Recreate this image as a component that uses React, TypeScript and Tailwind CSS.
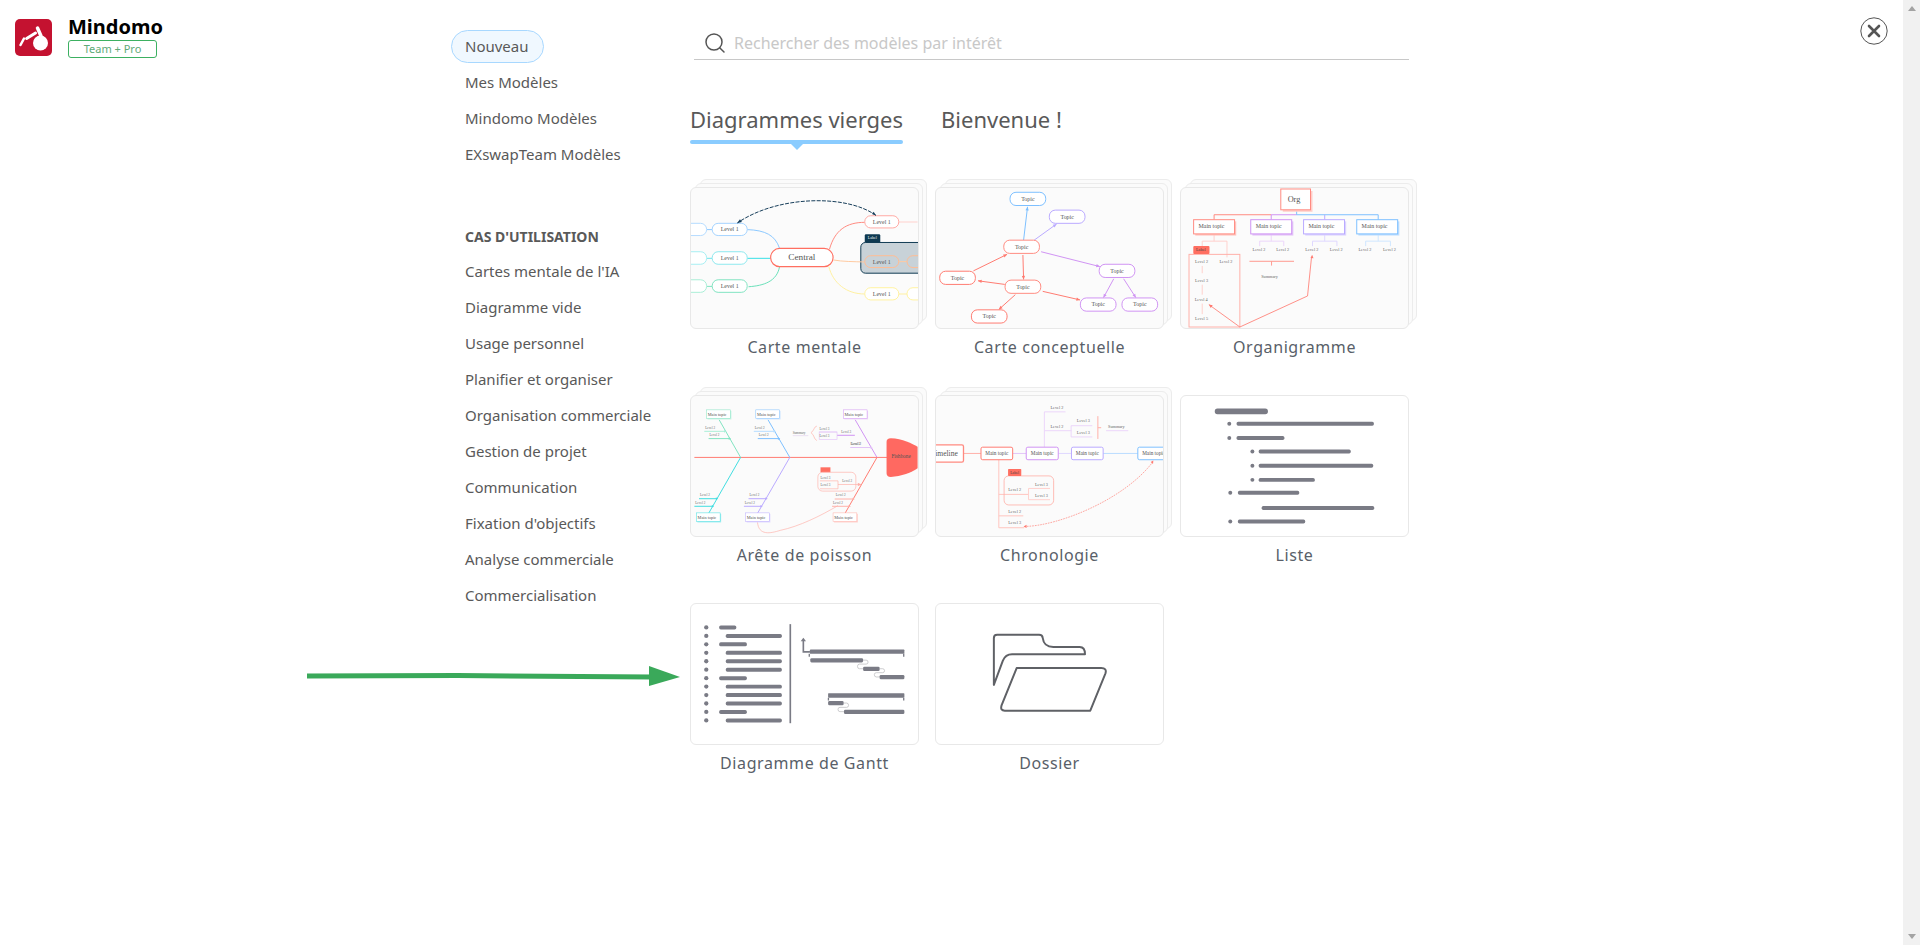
import { Search } from "lucide-react"
import type { ReactNode } from "react"

const RED = "#ff7a70"
const PINK = "#ffb0a8"
const BLUE = "#7cbfff"
const INDIGO = "#b9a9ff"
const PURPLE = "#cf93f3"
const CYAN = "#3fdde0"
const GREEN = "#7fe3c0"
const GREY = "#7a7b85"

const mainNav = ["Mes Modèles", "Mindomo Modèles", "EXswapTeam Modèles"]
const useCases = [
  "Cartes mentale de l'IA",
  "Diagramme vide",
  "Usage personnel",
  "Planifier et organiser",
  "Organisation commerciale",
  "Gestion de projet",
  "Communication",
  "Fixation d'objectifs",
  "Analyse commerciale",
  "Commercialisation",
]

type NodeProps = { x: number; y: number; w: number; h: number; r?: number; color: string; label?: string; size?: number; sw?: number; fill?: string }

function Node({ x, y, w, h, r = 18, color, label, size = 18, sw = 3, fill = "#fff" }: NodeProps) {
  return (
    <g>
      <rect x={x} y={y} width={w} height={h} rx={r} fill={fill} stroke={color} strokeWidth={sw} />
      {label && (
        <text x={x + w / 2} y={y + h / 2 + size * 0.32} textAnchor="middle" fontSize={size} fill="#555">
          {label}
        </text>
      )}
    </g>
  )
}

function Arrow({ x1, y1, x2, y2, color, sw = 3 }: { x1: number; y1: number; x2: number; y2: number; color: string; sw?: number }) {
  const a = Math.atan2(y2 - y1, x2 - x1)
  const p = (d: number, o: number) => `${x2 - d * Math.cos(a) - o * Math.sin(a)},${y2 - d * Math.sin(a) + o * Math.cos(a)}`
  return (
    <g>
      <line x1={x1} y1={y1} x2={x2} y2={y2} stroke={color} strokeWidth={sw} />
      <polygon points={`${x2},${y2} ${p(11, 5)} ${p(11, -5)}`} fill={color} />
    </g>
  )
}

function Thumb({ top, children }: { top: number; children: ReactNode }) {
  return (
    <svg viewBox={`31 ${top} 685 424`} className="block h-full w-full font-['Liberation_Serif',serif]">
      {children}
    </svg>
  )
}

function Txt({ x, y, size = 13, children, fill = "#666" }: { x: number; y: number; size?: number; children: string; fill?: string }) {
  return (
    <text x={x} y={y + size * 0.32} textAnchor="middle" fontSize={size} fill={fill}>
      {children}
    </text>
  )
}

function MindMap() {
  return (
    <Thumb top={52}>
      <g fill="none" strokeWidth={3}>
        <path d="M200 178C255 180 285 195 298 235" stroke="#8cc8ff" />
        <path d="M200 265H271" stroke="#35dfe6" />
        <path d="M204 351C250 348 290 335 298 290" stroke="#68e0b8" />
        <path d="M77 178H94" stroke="#8cc8ff" />
        <path d="M77 265H94" stroke="#6fe3ea" />
        <path d="M77 350H94" stroke={GREEN} />
        <path d="M449 238C465 180 500 156 556 156" stroke="#ff8a80" />
        <path d="M659 155H716" stroke="#ffd0cc" />
        <path d="M447 290C460 340 500 373 556 373" stroke="#fff0a0" />
        <path d="M659 373H684" stroke="#fff0a0" />
      </g>
      <Node x={-30} y={159} w={107} h={37} color="#b5dcff" />
      <Node x={-30} y={245} w={107} h={38} color="#a5eef2" />
      <Node x={-30} y={330} w={107} h={38} color="#a8eed6" />
      <Node x={94} y={159} w={106} h={37} color="#a5d3ff" label="Level 1" />
      <Node x={94} y={245} w={106} h={38} color="#8ce8ee" label="Level 1" />
      <Node x={94} y={330} w={106} h={38} color={GREEN} label="Level 1" />
      <Node x={556} y={136} w={103} h={37} color="#ffa9a3" label="Level 1" />
      <rect x={556} y={192} width={47} height={27} rx={4} fill="#0f3a52" />
      <Txt x={579} y={204} size={12} fill="#fff">Label</Txt>
      <rect x={544} y={217} width={190} height={93} rx={14} fill="#c8d2d8" stroke="#0f3a52" strokeWidth={3} />
      <path d="M461 270C490 275 520 275 556 276" fill="none" stroke="#ffc9a0" strokeWidth={3} />
      <path d="M659 275H684" stroke="#ffc9a0" strokeWidth={3} />
      <Node x={556} y={257} w={103} h={36} color="#ffbc94" label="Level 1" fill="#c8d2d8" />
      <Node x={684} y={257} w={80} h={36} color="#ffbc94" fill="#c8d2d8" />
      <Node x={556} y={354} w={103} h={37} color="#fff2a0" label="Level 1" />
      <Node x={684} y={354} w={80} h={37} color="#fff2a0" />
      <Node x={271} y={235} w={189} h={55} r={27} color="#ff6f61" sw={3.5} label="Central" size={28} />
      <path d="M590 135C500 70 290 75 170 158" fill="none" stroke="#143c58" strokeWidth={3} strokeDasharray="12 4" />
      <polygon points="170,158 178,147 184,155" fill="#143c58" />
      <polygon points="590,135 578,131 583,124" fill="#143c58" />
    </Thumb>
  )
}

function Concept() {
  const topic = { w: 108, h: 40, label: "Topic", size: 18 }
  return (
    <Thumb top={52}>
      <Arrow x1={295} y1={210} x2={307} y2={109} color={BLUE} />
      <Arrow x1={327} y1={210} x2={395} y2={161} color={INDIGO} />
      <Arrow x1={348} y1={245} x2={526} y2={290} color={PURPLE} />
      <Arrow x1={143} y1={303} x2={245} y2={253} color={RED} />
      <Arrow x1={293} y1={255} x2={295} y2={329} color={RED} />
      <Arrow x1={238} y1={344} x2={157} y2={333} color={RED} />
      <Arrow x1={270} y1={375} x2={220} y2={420} color={RED} />
      <Arrow x1={353} y1={365} x2={466} y2={391} color={RED} />
      <Arrow x1={568} y1={327} x2={537} y2={384} color={PURPLE} />
      <Arrow x1={598} y1={327} x2={635} y2={384} color={PURPLE} />
      <Node x={254} y={65} {...topic} color={BLUE} />
      <Node x={373} y={119} {...topic} color={INDIGO} />
      <Node x={235} y={210} {...topic} color="#ff8a80" />
      <Node x={41} y={304} {...topic} color={RED} />
      <Node x={239} y={331} {...topic} color="#ff8a80" />
      <Node x={137} y={421} {...topic} color={RED} />
      <Node x={524} y={283} {...topic} color={PURPLE} />
      <Node x={467} y={385} {...topic} color={PURPLE} />
      <Node x={593} y={385} {...topic} color={PURPLE} />
    </Thumb>
  )
}

function OrgBox({ x, color, back }: { x: number; color: string; back: string }) {
  return (
    <g>
      <rect x={x + 5} y={153} width={124} height={43} fill={back} />
      <rect x={x} y={148} width={124} height={43} fill="#fff" stroke={color} strokeWidth={3} />
      <Txt x={x + 54} y={168} size={18} fill="#555">Main topic</Txt>
    </g>
  )
}

function OrgChart() {
  return (
    <Thumb top={52}>
      <g fill="none" strokeWidth={3}>
        <path d="M130 148V133H303" stroke="#ff8a80" />
        <path d="M303 148V133H380" stroke={PURPLE} />
        <path d="M380 118V133H627V148" stroke={BLUE} />
        <path d="M465 133V148" stroke={INDIGO} />
        <path d="M130 191V213M94 240V213H169V262" stroke="#ffd0cc" />
        <path d="M303 191V213M268 228V213H341V228" stroke="#ecd6fa" />
        <path d="M465 191V213M428 228V213H502V228" stroke="#dfd8ff" />
        <path d="M627 191V213M589 228V213H664V228" stroke="#cfe7ff" />
        <path d="M94 288V310M94 345V375M94 402V434" stroke="#ffd0cc" />
        <path d="M237 274H372M304 274V287" stroke="#ff9a90" />
      </g>
      <rect x={338} y={61} width={90} height={63} fill="#ffcfca" />
      <rect x={332} y={55} width={90} height={63} fill="#fff" stroke="#ff8a80" strokeWidth={3} />
      <Txt x={372} y={86} size={25} fill="#555">Org</Txt>
      <OrgBox x={68} color="#ff8a80" back="#ffc4be" />
      <OrgBox x={241} color={PURPLE} back="#e3c4f8" />
      <OrgBox x={401} color={INDIGO} back="#dcd4ff" />
      <OrgBox x={562} color={BLUE} back="#bfdfff" />
      {[266, 338, 426, 500, 587, 661].map((x) => (
        <Txt key={x} x={x} y={238}>Level 2</Txt>
      ))}
      <rect x={54} y={253} width={154} height={220} fill="none" stroke={PINK} strokeWidth={3} />
      <rect x={67} y={228} width={49} height={24} rx={3} fill="#ff6f61" />
      <Txt x={90} y={239} size={13} fill="#444">Label</Txt>
      <Txt x={92} y={275}>Level 2</Txt>
      <Txt x={166} y={275}>Level 2</Txt>
      <Txt x={92} y={332}>Level 3</Txt>
      <Txt x={91} y={390}>Level 4</Txt>
      <Txt x={92} y={447}>Level 5</Txt>
      <Txt x={298} y={320}>Summary</Txt>
      <path d="M208 473L413 379L425 262" fill="none" stroke={RED} strokeWidth={2.5} />
      <polygon points="427,254 422,264 431,265" fill={RED} />
      <Arrow x1={208} y1={473} x2={114} y2={405} color={RED} sw={2.5} />
    </Thumb>
  )
}

function FishBox({ x, y, color, back, label }: { x: number; y: number; color: string; back: string; label: string }) {
  return (
    <g>
      <rect x={x + 3} y={y + 3} width={72} height={26} fill={back} />
      <rect x={x} y={y} width={72} height={26} fill="#fff" stroke={color} strokeWidth={1.5} />
      <Txt x={x + 32} y={y + 13} size={13} fill="#555">{label}</Txt>
    </g>
  )
}

function Fishbone() {
  const twigs: [number, number, number, string, string][] = [
    [70, 133, 153, "#a8eed6", "Level 2"],
    [83, 147, 175, GREEN, "Level 2"],
    [220, 283, 153, "#b5dcff", "Level 2"],
    [232, 296, 175, BLUE, "Level 2"],
    [512, 576, 202, "#e3c4f8", "Level 2"],
    [54, 108, 357, CYAN, "Level 2"],
    [40, 96, 380, CYAN, "Level 2"],
    [204, 258, 357, INDIGO, "Level 2"],
    [190, 243, 380, INDIGO, "Level 2"],
    [465, 522, 358, PINK, "Level 2"],
    [457, 510, 380, PINK, "Level 2"],
  ]
  return (
    <Thumb top={46}>
      <g fill="none" strokeWidth={3}>
        <path d="M40 232H630" stroke={RED} />
        <path d="M115 118L180 232" stroke={GREEN} />
        <path d="M263 118L329 232" stroke={BLUE} />
        <path d="M527 118L593 232" stroke={PURPLE} />
        <path d="M180 232L84 400" stroke={CYAN} />
        <path d="M329 232L232 400" stroke={INDIGO} />
        <path d="M593 232L497 400" stroke={RED} />
        <path d="M231 428C235 470 270 462 300 453C360 440 420 410 475 378" stroke={PINK} strokeWidth={2} />
        <path d="M338 166H385" stroke="#e3d4f0" strokeWidth={2} />
        <path d="M411 137C400 140 405 150 393 157C405 164 400 176 411 181" stroke={PINK} strokeWidth={2} />
        <path d="M472 165H526" stroke={PURPLE} />
      </g>
      {twigs.map(([a, b, y, color, label]) => (
        <g key={`${a}-${y}`}>
          <path d={`M${a} ${y}H${b}`} stroke={color} strokeWidth={3} />
          <polygon points={`${b + 4},${y} ${b - 3},${y - 4} ${b - 3},${y + 4}`} fill={color} />
          <Txt x={a + 18} y={y - 11} size={10}>{label}</Txt>
        </g>
      ))}
      <Txt x={357} y={157} size={10}>Summary</Txt>
      <rect x={418} y={155} width={54} height={23} fill="none" stroke="#e3c4f8" strokeWidth={2} />
      <path d="M418 155H472" stroke="#e3c4f8" strokeWidth={2} />
      <Txt x={434} y={146} size={10}>Level 3</Txt>
      <Txt x={434} y={168} size={10}>Level 3</Txt>
      <Txt x={500} y={156} size={10}>Level 3</Txt>
      <Txt x={528} y={192} size={10}>Level 2</Txt>
      <rect x={422} y={262} width={30} height={15} fill="#ff6f61" />
      <rect x={414} y={277} width={115} height={57} rx={14} fill="none" stroke={PINK} strokeWidth={2} />
      <path d="M420 303H475V327H420" fill="none" stroke={PINK} strokeWidth={2} />
      <Arrow x1={475} y1={314} x2={546} y2={314} color={PINK} sw={2} />
      <Txt x={437} y={293} size={10}>Level 3</Txt>
      <Txt x={437} y={316} size={10}>Level 3</Txt>
      <Txt x={503} y={304} size={10}>Level 2</Txt>
      <path d="M622 185Q622 174 635 174C670 175 700 190 716 200V265C700 278 665 290 635 291Q622 291 622 280Z" fill="#ff6961" />
      <Txt x={666} y={230} size={16} fill="#555">Fishbone</Txt>
      <FishBox x={77} y={88} color={GREEN} back="#c5f3e3" label="Main topic" />
      <FishBox x={226} y={88} color={BLUE} back="#cfe7ff" label="Main topic" />
      <FishBox x={491} y={88} color={PURPLE} back="#ecd6fa" label="Main topic" />
      <FishBox x={46} y={400} color={CYAN} back="#a5eef2" label="Main topic" />
      <FishBox x={195} y={400} color={INDIGO} back="#dfd8ff" label="Main topic" />
      <FishBox x={460} y={400} color={PINK} back="#ffd0cc" label="Main topic" />
    </Thumb>
  )
}

function Timeline() {
  return (
    <Thumb top={46}>
      <g fill="none" strokeWidth={3}>
        <path d="M113 220H166" stroke={PINK} />
        <path d="M262 220H303" stroke="#e3c4f8" />
        <path d="M400 220H440" stroke="#dfd8ff" />
        <path d="M536 220H641" stroke="#b9dcff" />
        <path d="M358 201V94H422M358 151H440M439 136V170M439 136H503M439 170H503M545 151H612" stroke="#ecd6fa" />
        <path d="M520 107V176M520 142H530" stroke={PINK} />
        <path d="M220 239V445H297M220 409H294M220 344H310" stroke="#ffc4be" />
        <path d="M310 326V360M310 326H375M310 360H375" stroke="#ffd0cc" />
      </g>
      <rect x={-40} y={194} width={153} height={52} rx={5} fill="#fff" stroke="#ff8a80" strokeWidth={4} />
      <text x={96} y={228} textAnchor="end" fontSize={23} fill="#555">imeline</text>
      <Node x={166} y={201} w={96} h={38} r={5} color={RED} label="Main topic" size={16} />
      <Node x={303} y={201} w={97} h={38} r={5} color={PURPLE} label="Main topic" size={16} />
      <Node x={440} y={201} w={96} h={38} r={5} color={INDIGO} label="Main topic" size={16} />
      <Node x={641} y={201} w={96} h={38} r={5} color={BLUE} label="Main topic" size={16} />
      <Txt x={396} y={81}>Level 2</Txt>
      <Txt x={396} y={139}>Level 2</Txt>
      <Txt x={476} y={122}>Level 3</Txt>
      <Txt x={476} y={157}>Level 3</Txt>
      <Txt x={576} y={140}>Summary</Txt>
      <rect x={236} y={288} width={150} height={88} rx={14} fill="none" stroke={PINK} strokeWidth={2.5} />
      <rect x={248} y={267} width={40} height={21} rx={2} fill="#ff6f61" />
      <Txt x={268} y={277} size={12} fill="#444">Label</Txt>
      <Txt x={268} y={330}>Level 2</Txt>
      <Txt x={349} y={313}>Level 3</Txt>
      <Txt x={349} y={347}>Level 3</Txt>
      <Txt x={268} y={397}>Level 2</Txt>
      <Txt x={268} y={431}>Level 3</Txt>
      <path d="M298 441C400 440 600 360 686 246" fill="none" stroke={RED} strokeWidth={2} strokeDasharray="5 3" />
      <polygon points="688,241 680,246 687,252" fill={RED} />
      <polygon points="295,441 304,436 304,446" fill={RED} />
    </Thumb>
  )
}

function ListThumb() {
  const rows = [
    [176, 198, 614, 130],
    [176, 198, 343, 173],
    [246, 265, 544, 214],
    [246, 265, 612, 257],
    [246, 265, 435, 300],
    [179, 202, 388, 339],
    [0, 274, 615, 385],
    [179, 202, 406, 426],
  ]
  return (
    <Thumb top={46}>
      <rect x={132} y={84} width={161} height={17} rx={8} fill={GREY} />
      {rows.map(([dot, a, b, y]) => (
        <g key={y}>
          {dot > 0 && <circle cx={dot} cy={y} r={6} fill={GREY} />}
          <rect x={a} y={y - 6} width={b - a} height={12} rx={5} fill={GREY} />
        </g>
      ))}
    </Thumb>
  )
}

function Gantt() {
  const rows = [167, 305, 199, 305, 305, 305, 199, 305, 305, 305, 199, 305]
  const bars = [
    [391, 551, 210],
    [551, 601, 236],
    [601, 676, 261],
    [445, 492, 340],
    [493, 676, 366],
  ]
  return (
    <Thumb top={40}>
      {rows.map((end, i) => {
        const y = 111 + i * 25.6
        const x = end === 305 ? 135 : 115
        return (
          <g key={i}>
            <circle cx={76} cy={y} r={6.5} fill={GREY} />
            <rect x={x} y={y - 6} width={end - x} height={12} rx={5} fill={GREY} />
          </g>
        )
      })}
      <rect x={328} y={101} width={5} height={300} fill={GREY} />
      <path d="M370 152V185H390" fill="none" stroke={GREY} strokeWidth={5} />
      <polygon points="370,142 362,153 378,153" fill={GREY} />
      <rect x={390} y={178} width={286} height={13} rx={2} fill={GREY} />
      <path d="M388 191V200M674 191V200" stroke={GREY} strokeWidth={4} />
      <rect x={445} y={310} width={231} height={14} rx={2} fill={GREY} />
      <path d="M446 324V332M674 324V332" stroke={GREY} strokeWidth={4} />
      <g fill="none" stroke="#b5b5b8" strokeWidth={2}>
        <path d="M551 210H560Q566 210 566 216Q566 222 560 222H540Q534 222 534 229Q534 236 540 236H551" />
        <path d="M601 236H610Q616 236 616 242Q616 248 610 248H591Q585 248 585 254Q585 261 591 261H601" />
        <path d="M492 340H501Q507 340 507 347Q507 353 501 353H481Q475 353 475 359Q475 366 481 366H493" />
      </g>
      {bars.map(([a, b, y]) => (
        <rect key={a} x={a} y={y - 6} width={b - a} height={13} rx={4} fill={GREY} />
      ))}
    </Thumb>
  )
}

function Folder() {
  return (
    <Thumb top={40}>
      <g fill="none" stroke="#5f6166" strokeWidth={6} strokeLinejoin="round">
        <path d="M205 285V143Q205 133 215 133H342Q352 133 353 143C355 160 365 170 385 170H465Q481 170 481 192H260Q240 192 232 212Z" />
        <path d="M274 234H530Q548 234 543 250L497 363H238Q224 363 228 348Z" />
      </g>
    </Thumb>
  )
}

function Card({ label, stacked, children }: { label: string; stacked?: boolean; children: ReactNode }) {
  return (
    <div>
      <div className="relative h-[142px] w-[229px]">
        {stacked && (
          <>
            <div className="absolute left-[10px] top-[-8px] h-[142px] w-[227px] rounded-[6px] border border-[#ececec] bg-[#fbfbfb]" />
            <div className="absolute left-[5px] top-[-4px] h-[142px] w-[228px] rounded-[6px] border border-[#ececec] bg-[#fbfbfb]" />
          </>
        )}
        <div className={`relative h-full w-full overflow-hidden rounded-[6px] border border-[#e8e8e8] ${stacked ? "bg-[#fbfbfb]" : "bg-white"}`}>
          {children}
        </div>
      </div>
      <div className="h-9 text-center text-[16px] leading-9 tracking-[0.6px] text-[#595f69]">{label}</div>
    </div>
  )
}

function NavItem({ label }: { label: string }) {
  return <div className="flex h-[33px] items-center pl-[14px] text-[15px] text-[#595959]">{label}</div>
}

export default function App() {
  return (
    <div className="relative flex h-screen w-full overflow-hidden bg-white font-['Noto_Sans',sans-serif]">
      <div className="flex min-w-0 flex-1">
        {/* Brand */}
        <div className="w-[451px] shrink-0 pl-[15px] pt-[19px]">
          <div className="flex gap-4">
            <svg viewBox="0 0 37 37" className="h-[37px] w-[37px]">
              <rect width="37" height="37" rx="5" fill="#c41230" />
              <circle cx="25.5" cy="24" r="7.5" fill="#fff" />
              <g stroke="#fff" fill="none" strokeLinecap="round">
                <path d="M22.5 9L26 17" strokeWidth="3.5" />
                <path d="M11.6 19.5L20.5 14" strokeWidth="3" />
                <path d="M5.5 26L9 19.5" strokeWidth="2.5" />
              </g>
            </svg>
            <div>
              <div className="h-[21px] text-[20px] font-bold leading-[16px] text-black">Mindomo</div>
              <div className="flex h-[18px] w-[89px] items-center justify-center rounded-[3px] border border-[#3cb061] text-[11px] text-[#5faa78]">
                Team + Pro
              </div>
            </div>
          </div>
        </div>

        {/* Navigation */}
        <nav className="w-[239px] shrink-0 pt-[30px]">
          <div className="flex flex-col gap-[3px]">
            <div className="flex h-[33px] w-[93px] items-center rounded-full border border-[#a8d8ff] bg-[#f0f8ff] pl-[13px] text-[15px] text-[#595959]">
              Nouveau
            </div>
            {mainNav.map((item) => (
              <NavItem key={item} label={item} />
            ))}
          </div>
          <div className="mt-[49px] flex h-[33px] items-center pl-[14px] text-[14px] font-bold text-[#595959]">CAS D'UTILISATION</div>
          <div className="mt-[2px] flex flex-col gap-[3px]">
            {useCases.map((item) => (
              <NavItem key={item} label={item} />
            ))}
          </div>
        </nav>

        {/* Templates */}
        <main className="w-[725px] shrink-0">
          <div className="ml-1 mt-[30px] flex h-[30px] w-[715px] items-center gap-[7px] border-b border-[#c8c8c8] pb-[3px] pl-[9px]">
            <Search size={24} strokeWidth={1.5} className="text-[#555]" />
            <input
              placeholder="Rechercher des modèles par intérêt"
              className="flex-1 bg-transparent text-[16px] outline-none placeholder:text-[#c8c8c8]"
            />
          </div>
          <div className="mt-[44px] flex gap-[38px] text-[22px] leading-[30px] text-[#595959]">
            <div className="relative">
              Diagrammes vierges
              <div className="mt-[6px] h-1 rounded-full bg-[#8accff]" />
              <div className="absolute left-1/2 top-[40px] h-0 w-0 -translate-x-1/2 border-x-[6px] border-t-[6px] border-x-transparent border-t-[#8accff]" />
            </div>
            <div>Bienvenue !</div>
          </div>
          <div className="mt-[43px] grid grid-cols-[repeat(3,229px)] gap-x-4 gap-y-[30px]">
            <Card label="Carte mentale" stacked><MindMap /></Card>
            <Card label="Carte conceptuelle" stacked><Concept /></Card>
            <Card label="Organigramme" stacked><OrgChart /></Card>
            <Card label="Arête de poisson" stacked><Fishbone /></Card>
            <Card label="Chronologie" stacked><Timeline /></Card>
            <Card label="Liste"><ListThumb /></Card>
            <Card label="Diagramme de Gantt"><Gantt /></Card>
            <Card label="Dossier"><Folder /></Card>
          </div>
        </main>

        {/* Close */}
        <div className="flex flex-1 justify-end pr-[15px] pt-[17px]">
          <svg viewBox="0 0 28 28" className="h-7 w-7">
            <circle cx="14" cy="14" r="13.2" fill="none" stroke="#555" strokeWidth="1" />
            <path d="M9 9L19 19M19 9L9 19" stroke="#555" strokeWidth="2.6" strokeLinecap="round" />
          </svg>
        </div>
      </div>

      {/* Scrollbar */}
      <div className="flex w-[17px] shrink-0 flex-col items-center justify-between bg-[#f1f1f1] py-[6px]">
        <div className="h-0 w-0 border-x-[4px] border-b-[5px] border-x-transparent border-b-[#a3a3a3]" />
        <div className="h-0 w-0 border-x-[4px] border-t-[5px] border-x-transparent border-t-[#a3a3a3]" />
      </div>

      {/* Annotation arrow */}
      <svg viewBox="0 0 373 24" className="absolute left-[307px] top-[664px] h-6 w-[373px]">
        <path d="M0 12L150 11.5L345 13" fill="none" stroke="#3aa95a" strokeWidth="5" />
        <polygon points="342,2 373,13 342,22" fill="#3aa95a" />
      </svg>
    </div>
  )
}
